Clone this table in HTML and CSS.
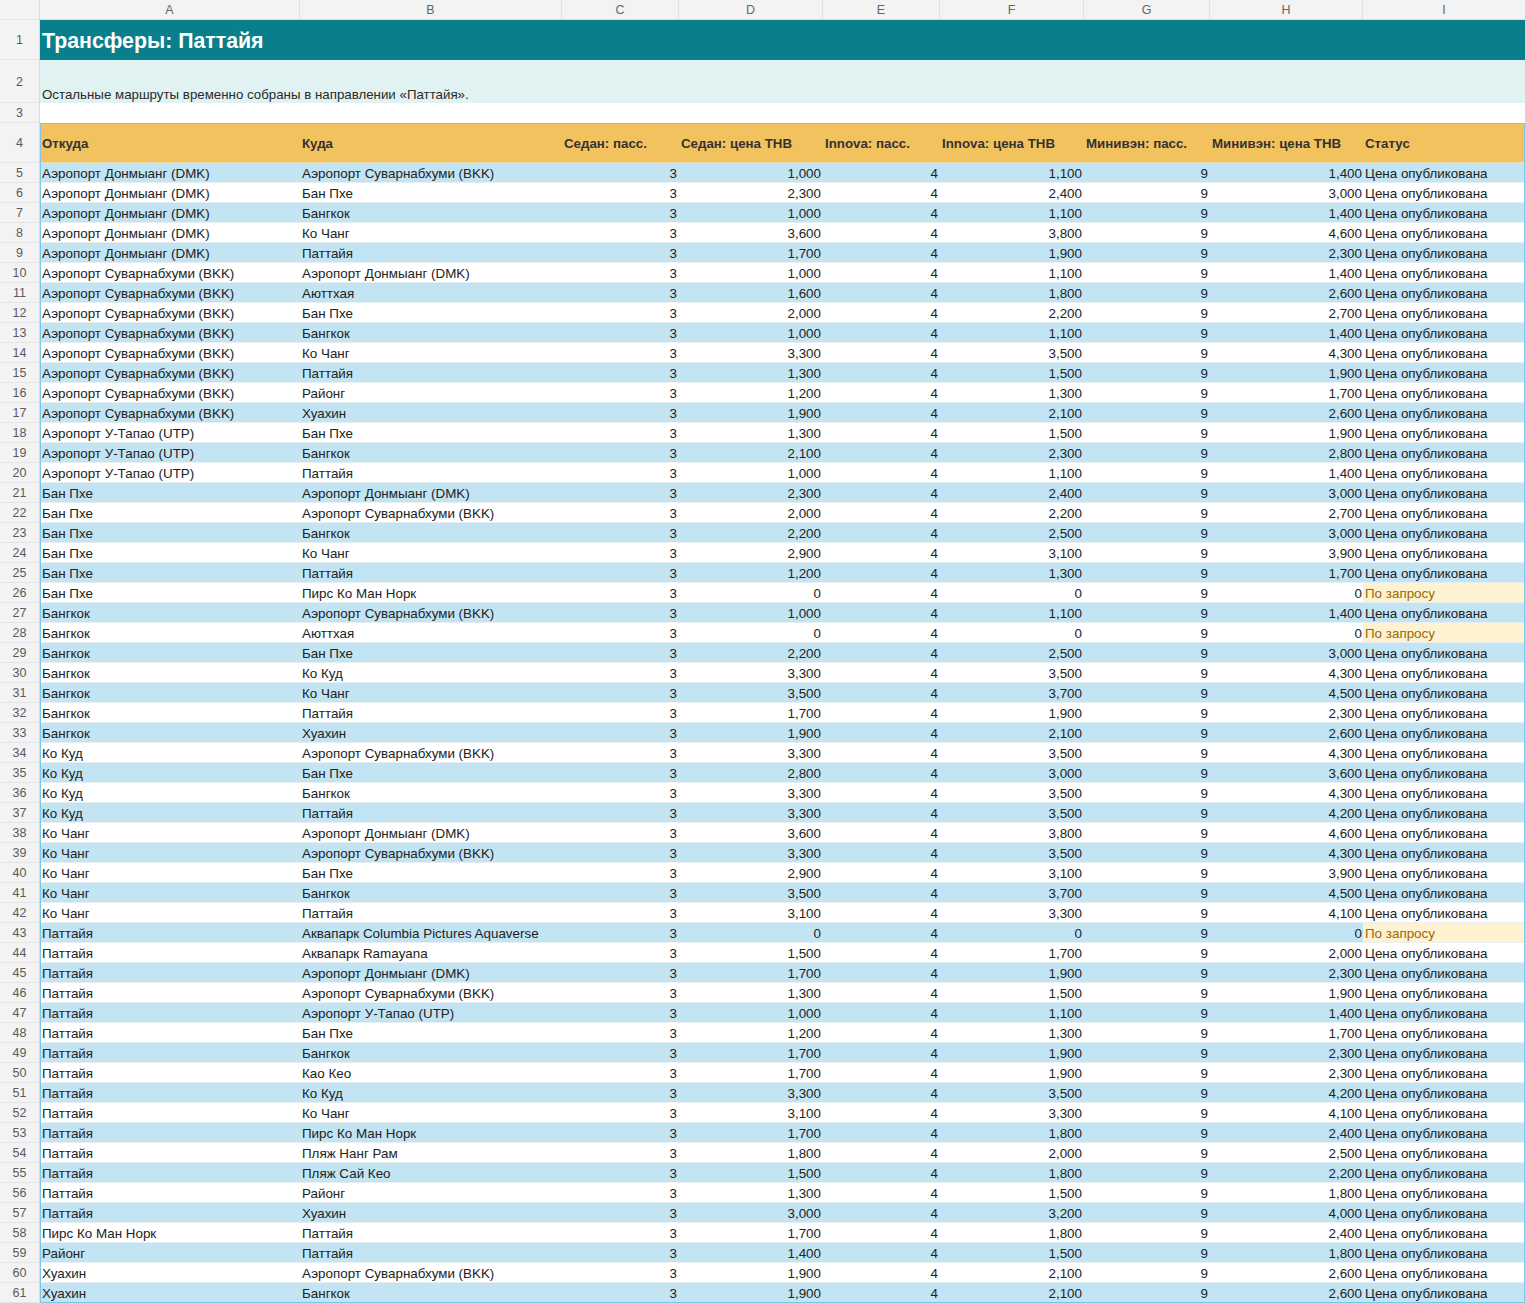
FILE: index.html
```html
<!DOCTYPE html>
<html lang="ru">
<head>
<meta charset="utf-8">
<title>Трансферы: Паттайя</title>
<link rel="stylesheet" href="styles.css">
</head>
<body>
<div class="sheet">
  <div class="r colhead"><span class="n"></span><span>A</span><span>B</span><span>C</span><span>D</span><span>E</span><span>F</span><span>G</span><span>H</span><span>I</span></div>
  <div class="r title"><span class="n">1</span><span class="wide">Трансферы: Паттайя</span></div>
  <div class="r sub"><span class="n">2</span><span class="wide">Остальные маршруты временно собраны в направлении «Паттайя».</span></div>
  <div class="r blank"><span class="n">3</span><span class="wide"></span></div>
  <div class="tbl">
    <div class="r head"><span class="n">4</span><span>Откуда</span><span>Куда</span><span>Седан: пасс.</span><span>Седан: цена THB</span><span>Innova: пасс.</span><span>Innova: цена THB</span><span>Минивэн: пасс.</span><span>Минивэн: цена THB</span><span>Статус</span></div>
    <div class="r d b"><span class="n">5</span><span>Аэропорт Донмыанг (DMK)</span><span>Аэропорт Суварнабхуми (BKK)</span><span>3</span><span>1,000</span><span>4</span><span>1,100</span><span>9</span><span>1,400</span><span>Цена опубликована</span></div>
    <div class="r d"><span class="n">6</span><span>Аэропорт Донмыанг (DMK)</span><span>Бан Пхе</span><span>3</span><span>2,300</span><span>4</span><span>2,400</span><span>9</span><span>3,000</span><span>Цена опубликована</span></div>
    <div class="r d b"><span class="n">7</span><span>Аэропорт Донмыанг (DMK)</span><span>Бангкок</span><span>3</span><span>1,000</span><span>4</span><span>1,100</span><span>9</span><span>1,400</span><span>Цена опубликована</span></div>
    <div class="r d"><span class="n">8</span><span>Аэропорт Донмыанг (DMK)</span><span>Ко Чанг</span><span>3</span><span>3,600</span><span>4</span><span>3,800</span><span>9</span><span>4,600</span><span>Цена опубликована</span></div>
    <div class="r d b"><span class="n">9</span><span>Аэропорт Донмыанг (DMK)</span><span>Паттайя</span><span>3</span><span>1,700</span><span>4</span><span>1,900</span><span>9</span><span>2,300</span><span>Цена опубликована</span></div>
    <div class="r d"><span class="n">10</span><span>Аэропорт Суварнабхуми (BKK)</span><span>Аэропорт Донмыанг (DMK)</span><span>3</span><span>1,000</span><span>4</span><span>1,100</span><span>9</span><span>1,400</span><span>Цена опубликована</span></div>
    <div class="r d b"><span class="n">11</span><span>Аэропорт Суварнабхуми (BKK)</span><span>Аюттхая</span><span>3</span><span>1,600</span><span>4</span><span>1,800</span><span>9</span><span>2,600</span><span>Цена опубликована</span></div>
    <div class="r d"><span class="n">12</span><span>Аэропорт Суварнабхуми (BKK)</span><span>Бан Пхе</span><span>3</span><span>2,000</span><span>4</span><span>2,200</span><span>9</span><span>2,700</span><span>Цена опубликована</span></div>
    <div class="r d b"><span class="n">13</span><span>Аэропорт Суварнабхуми (BKK)</span><span>Бангкок</span><span>3</span><span>1,000</span><span>4</span><span>1,100</span><span>9</span><span>1,400</span><span>Цена опубликована</span></div>
    <div class="r d"><span class="n">14</span><span>Аэропорт Суварнабхуми (BKK)</span><span>Ко Чанг</span><span>3</span><span>3,300</span><span>4</span><span>3,500</span><span>9</span><span>4,300</span><span>Цена опубликована</span></div>
    <div class="r d b"><span class="n">15</span><span>Аэропорт Суварнабхуми (BKK)</span><span>Паттайя</span><span>3</span><span>1,300</span><span>4</span><span>1,500</span><span>9</span><span>1,900</span><span>Цена опубликована</span></div>
    <div class="r d"><span class="n">16</span><span>Аэропорт Суварнабхуми (BKK)</span><span>Районг</span><span>3</span><span>1,200</span><span>4</span><span>1,300</span><span>9</span><span>1,700</span><span>Цена опубликована</span></div>
    <div class="r d b"><span class="n">17</span><span>Аэропорт Суварнабхуми (BKK)</span><span>Хуахин</span><span>3</span><span>1,900</span><span>4</span><span>2,100</span><span>9</span><span>2,600</span><span>Цена опубликована</span></div>
    <div class="r d"><span class="n">18</span><span>Аэропорт У-Тапао (UTP)</span><span>Бан Пхе</span><span>3</span><span>1,300</span><span>4</span><span>1,500</span><span>9</span><span>1,900</span><span>Цена опубликована</span></div>
    <div class="r d b"><span class="n">19</span><span>Аэропорт У-Тапао (UTP)</span><span>Бангкок</span><span>3</span><span>2,100</span><span>4</span><span>2,300</span><span>9</span><span>2,800</span><span>Цена опубликована</span></div>
    <div class="r d"><span class="n">20</span><span>Аэропорт У-Тапао (UTP)</span><span>Паттайя</span><span>3</span><span>1,000</span><span>4</span><span>1,100</span><span>9</span><span>1,400</span><span>Цена опубликована</span></div>
    <div class="r d b"><span class="n">21</span><span>Бан Пхе</span><span>Аэропорт Донмыанг (DMK)</span><span>3</span><span>2,300</span><span>4</span><span>2,400</span><span>9</span><span>3,000</span><span>Цена опубликована</span></div>
    <div class="r d"><span class="n">22</span><span>Бан Пхе</span><span>Аэропорт Суварнабхуми (BKK)</span><span>3</span><span>2,000</span><span>4</span><span>2,200</span><span>9</span><span>2,700</span><span>Цена опубликована</span></div>
    <div class="r d b"><span class="n">23</span><span>Бан Пхе</span><span>Бангкок</span><span>3</span><span>2,200</span><span>4</span><span>2,500</span><span>9</span><span>3,000</span><span>Цена опубликована</span></div>
    <div class="r d"><span class="n">24</span><span>Бан Пхе</span><span>Ко Чанг</span><span>3</span><span>2,900</span><span>4</span><span>3,100</span><span>9</span><span>3,900</span><span>Цена опубликована</span></div>
    <div class="r d b"><span class="n">25</span><span>Бан Пхе</span><span>Паттайя</span><span>3</span><span>1,200</span><span>4</span><span>1,300</span><span>9</span><span>1,700</span><span>Цена опубликована</span></div>
    <div class="r d"><span class="n">26</span><span>Бан Пхе</span><span>Пирс Ко Ман Норк</span><span>3</span><span>0</span><span>4</span><span>0</span><span>9</span><span>0</span><span class="q">По запросу</span></div>
    <div class="r d b"><span class="n">27</span><span>Бангкок</span><span>Аэропорт Суварнабхуми (BKK)</span><span>3</span><span>1,000</span><span>4</span><span>1,100</span><span>9</span><span>1,400</span><span>Цена опубликована</span></div>
    <div class="r d"><span class="n">28</span><span>Бангкок</span><span>Аюттхая</span><span>3</span><span>0</span><span>4</span><span>0</span><span>9</span><span>0</span><span class="q">По запросу</span></div>
    <div class="r d b"><span class="n">29</span><span>Бангкок</span><span>Бан Пхе</span><span>3</span><span>2,200</span><span>4</span><span>2,500</span><span>9</span><span>3,000</span><span>Цена опубликована</span></div>
    <div class="r d"><span class="n">30</span><span>Бангкок</span><span>Ко Куд</span><span>3</span><span>3,300</span><span>4</span><span>3,500</span><span>9</span><span>4,300</span><span>Цена опубликована</span></div>
    <div class="r d b"><span class="n">31</span><span>Бангкок</span><span>Ко Чанг</span><span>3</span><span>3,500</span><span>4</span><span>3,700</span><span>9</span><span>4,500</span><span>Цена опубликована</span></div>
    <div class="r d"><span class="n">32</span><span>Бангкок</span><span>Паттайя</span><span>3</span><span>1,700</span><span>4</span><span>1,900</span><span>9</span><span>2,300</span><span>Цена опубликована</span></div>
    <div class="r d b"><span class="n">33</span><span>Бангкок</span><span>Хуахин</span><span>3</span><span>1,900</span><span>4</span><span>2,100</span><span>9</span><span>2,600</span><span>Цена опубликована</span></div>
    <div class="r d"><span class="n">34</span><span>Ко Куд</span><span>Аэропорт Суварнабхуми (BKK)</span><span>3</span><span>3,300</span><span>4</span><span>3,500</span><span>9</span><span>4,300</span><span>Цена опубликована</span></div>
    <div class="r d b"><span class="n">35</span><span>Ко Куд</span><span>Бан Пхе</span><span>3</span><span>2,800</span><span>4</span><span>3,000</span><span>9</span><span>3,600</span><span>Цена опубликована</span></div>
    <div class="r d"><span class="n">36</span><span>Ко Куд</span><span>Бангкок</span><span>3</span><span>3,300</span><span>4</span><span>3,500</span><span>9</span><span>4,300</span><span>Цена опубликована</span></div>
    <div class="r d b"><span class="n">37</span><span>Ко Куд</span><span>Паттайя</span><span>3</span><span>3,300</span><span>4</span><span>3,500</span><span>9</span><span>4,200</span><span>Цена опубликована</span></div>
    <div class="r d"><span class="n">38</span><span>Ко Чанг</span><span>Аэропорт Донмыанг (DMK)</span><span>3</span><span>3,600</span><span>4</span><span>3,800</span><span>9</span><span>4,600</span><span>Цена опубликована</span></div>
    <div class="r d b"><span class="n">39</span><span>Ко Чанг</span><span>Аэропорт Суварнабхуми (BKK)</span><span>3</span><span>3,300</span><span>4</span><span>3,500</span><span>9</span><span>4,300</span><span>Цена опубликована</span></div>
    <div class="r d"><span class="n">40</span><span>Ко Чанг</span><span>Бан Пхе</span><span>3</span><span>2,900</span><span>4</span><span>3,100</span><span>9</span><span>3,900</span><span>Цена опубликована</span></div>
    <div class="r d b"><span class="n">41</span><span>Ко Чанг</span><span>Бангкок</span><span>3</span><span>3,500</span><span>4</span><span>3,700</span><span>9</span><span>4,500</span><span>Цена опубликована</span></div>
    <div class="r d"><span class="n">42</span><span>Ко Чанг</span><span>Паттайя</span><span>3</span><span>3,100</span><span>4</span><span>3,300</span><span>9</span><span>4,100</span><span>Цена опубликована</span></div>
    <div class="r d b"><span class="n">43</span><span>Паттайя</span><span>Аквапарк Columbia Pictures Aquaverse</span><span>3</span><span>0</span><span>4</span><span>0</span><span>9</span><span>0</span><span class="q">По запросу</span></div>
    <div class="r d"><span class="n">44</span><span>Паттайя</span><span>Аквапарк Ramayana</span><span>3</span><span>1,500</span><span>4</span><span>1,700</span><span>9</span><span>2,000</span><span>Цена опубликована</span></div>
    <div class="r d b"><span class="n">45</span><span>Паттайя</span><span>Аэропорт Донмыанг (DMK)</span><span>3</span><span>1,700</span><span>4</span><span>1,900</span><span>9</span><span>2,300</span><span>Цена опубликована</span></div>
    <div class="r d"><span class="n">46</span><span>Паттайя</span><span>Аэропорт Суварнабхуми (BKK)</span><span>3</span><span>1,300</span><span>4</span><span>1,500</span><span>9</span><span>1,900</span><span>Цена опубликована</span></div>
    <div class="r d b"><span class="n">47</span><span>Паттайя</span><span>Аэропорт У-Тапао (UTP)</span><span>3</span><span>1,000</span><span>4</span><span>1,100</span><span>9</span><span>1,400</span><span>Цена опубликована</span></div>
    <div class="r d"><span class="n">48</span><span>Паттайя</span><span>Бан Пхе</span><span>3</span><span>1,200</span><span>4</span><span>1,300</span><span>9</span><span>1,700</span><span>Цена опубликована</span></div>
    <div class="r d b"><span class="n">49</span><span>Паттайя</span><span>Бангкок</span><span>3</span><span>1,700</span><span>4</span><span>1,900</span><span>9</span><span>2,300</span><span>Цена опубликована</span></div>
    <div class="r d"><span class="n">50</span><span>Паттайя</span><span>Као Кео</span><span>3</span><span>1,700</span><span>4</span><span>1,900</span><span>9</span><span>2,300</span><span>Цена опубликована</span></div>
    <div class="r d b"><span class="n">51</span><span>Паттайя</span><span>Ко Куд</span><span>3</span><span>3,300</span><span>4</span><span>3,500</span><span>9</span><span>4,200</span><span>Цена опубликована</span></div>
    <div class="r d"><span class="n">52</span><span>Паттайя</span><span>Ко Чанг</span><span>3</span><span>3,100</span><span>4</span><span>3,300</span><span>9</span><span>4,100</span><span>Цена опубликована</span></div>
    <div class="r d b"><span class="n">53</span><span>Паттайя</span><span>Пирс Ко Ман Норк</span><span>3</span><span>1,700</span><span>4</span><span>1,800</span><span>9</span><span>2,400</span><span>Цена опубликована</span></div>
    <div class="r d"><span class="n">54</span><span>Паттайя</span><span>Пляж Нанг Рам</span><span>3</span><span>1,800</span><span>4</span><span>2,000</span><span>9</span><span>2,500</span><span>Цена опубликована</span></div>
    <div class="r d b"><span class="n">55</span><span>Паттайя</span><span>Пляж Сай Кео</span><span>3</span><span>1,500</span><span>4</span><span>1,800</span><span>9</span><span>2,200</span><span>Цена опубликована</span></div>
    <div class="r d"><span class="n">56</span><span>Паттайя</span><span>Районг</span><span>3</span><span>1,300</span><span>4</span><span>1,500</span><span>9</span><span>1,800</span><span>Цена опубликована</span></div>
    <div class="r d b"><span class="n">57</span><span>Паттайя</span><span>Хуахин</span><span>3</span><span>3,000</span><span>4</span><span>3,200</span><span>9</span><span>4,000</span><span>Цена опубликована</span></div>
    <div class="r d"><span class="n">58</span><span>Пирс Ко Ман Норк</span><span>Паттайя</span><span>3</span><span>1,700</span><span>4</span><span>1,800</span><span>9</span><span>2,400</span><span>Цена опубликована</span></div>
    <div class="r d b"><span class="n">59</span><span>Районг</span><span>Паттайя</span><span>3</span><span>1,400</span><span>4</span><span>1,500</span><span>9</span><span>1,800</span><span>Цена опубликована</span></div>
    <div class="r d"><span class="n">60</span><span>Хуахин</span><span>Аэропорт Суварнабхуми (BKK)</span><span>3</span><span>1,900</span><span>4</span><span>2,100</span><span>9</span><span>2,600</span><span>Цена опубликована</span></div>
    <div class="r d b"><span class="n">61</span><span>Хуахин</span><span>Бангкок</span><span>3</span><span>1,900</span><span>4</span><span>2,100</span><span>9</span><span>2,600</span><span>Цена опубликована</span></div>
  </div>
</div>
</body>
</html>
```
FILE: styles.css
```css
* { box-sizing: border-box; }
html, body { margin: 0; padding: 0; background: #ffffff; }
body {
  font-family: "Liberation Sans", Arial, "Helvetica Neue", sans-serif;
  font-size: 13.4px;
  color: #222222;
}
.sheet { width: 1525px; overflow: hidden; }
.r {
  display: grid;
  grid-template-columns: 40px 260px 262px 117px 144px 117px 144px 126px 153px 162px;
  height: 20px;
}
.r > span {
  display: flex;
  align-items: center;
  padding: 1px 2px 0;
  white-space: nowrap;
  overflow: hidden;
}
.r > .n {
  justify-content: center;
  background: #f3f3f3;
  color: #5a5a5a;
  font-size: 12.5px;
  border-right: 1px solid #dcdcdc;
  border-bottom: 1px solid #e4e4e4;
}
.r > .wide { grid-column: 2 / -1; }

/* column letters */
.colhead { height: 20px; background: #f3f3f3; }
.colhead > span {
  justify-content: center;
  color: #666666;
  font-size: 12.5px;
  padding-top: 0;
  border-right: 1px solid #e0e0e0;
  border-bottom: 1px solid #dedede;
}
.colhead > span:last-child { border-right: 0; }

/* title */
.title { height: 40px; }
.title > .wide {
  background: #097f8b;
  color: #ffffff;
  font-weight: bold;
  font-size: 21.3px;
  padding-top: 2px;
}
.sub { height: 43px; }
.sub > .wide {
  background: #e0f2f2;
  align-items: flex-end;
  padding-bottom: 1px;
  font-size: 13.3px;
  color: #2a2a2a;
}
.blank > .wide { background: #ffffff; }

/* table */
.tbl { position: relative; }
.tbl::after {
  content: "";
  position: absolute;
  left: 40px;
  top: 0;
  right: 0;
  bottom: 0;
  border: 1px solid #7dc5ea;
  pointer-events: none;
}
.head { height: 40px; }
.head > span:not(.n) {
  background: #f2c25f;
  font-weight: bold;
  font-size: 13.3px;
  color: #333333;
  padding-top: 2px;
  border-bottom: 1px solid #eddcae;
}
.d > span:not(.n) { border-bottom: 1px solid #e9eef1; }
.d.b > span:not(.n) { background: #c3e4f3; }
.d > span:nth-child(n+4):nth-child(-n+9) { justify-content: flex-end; }
.d > span:nth-child(9) { padding-right: 1px; }
.d > span:nth-child(10) { padding-left: 2px; }
.d > span.q { background: #fff2d1; color: #94680a; }
.d.b > span.q { background: #fff2d1; }
```
